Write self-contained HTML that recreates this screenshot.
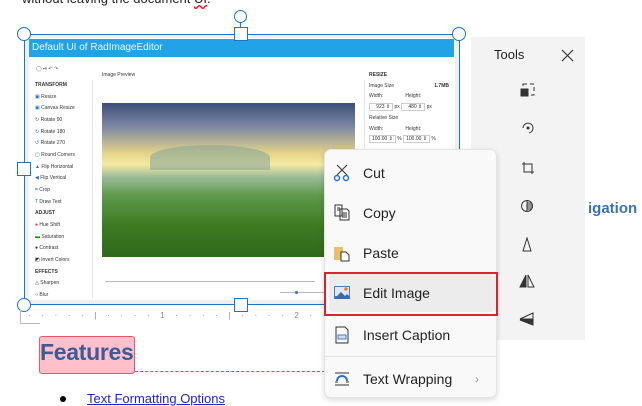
<!DOCTYPE html>
<html><head><meta charset="utf-8"><style>
*{margin:0;padding:0;box-sizing:border-box}
body{width:642px;height:401px;overflow:hidden;background:#fff;font-family:"Liberation Sans",sans-serif;position:relative}
.a{position:absolute}
.sb{font-size:5px;color:#333}
.mi{position:absolute;left:0;width:173px;height:40px;font-size:14px;color:#222;display:flex;align-items:center}
.mi span{position:absolute;left:38px}
.mi svg{position:absolute;left:8px}
</style></head><body>
<div class="a" style="left:22px;top:-9px;font-size:13px;color:#222">without leaving the document <span style="text-decoration:underline wavy red">UI</span>.</div>

<!-- embedded image -->
<div class="a" style="left:25px;top:35px;width:434px;height:269px;background:#f0f0f0"></div>
<div class="a" style="left:29px;top:38px;width:426px;height:262px;background:#fff"></div>
<div class="a" style="left:29px;top:39px;width:425px;height:18px;background:#22a3e8;color:#eaf6ff;font-size:10px;padding:3px 3px">Default UI of RadImageEditor</div>
<div class="a" style="left:92px;top:80px;width:1px;height:218px;background:#e6e6e6"></div>
<div class="a" style="left:364px;top:80px;width:1px;height:80px;background:#e6e6e6"></div>
<div class="a sb" style="left:36px;top:66px;color:#555">◯ ⏯ ↶ ↷</div>
<div class="a sb" style="left:35px;top:80px;line-height:11.65px;font-size:5px">
<b>TRANSFORM</b><br>
<span style="color:#2a6fc9">▣</span> Resize<br><span style="color:#2a6fc9">▣</span> Canvas Resize<br><span style="color:#2a6fc9">↻</span> Rotate 90<br><span style="color:#2a6fc9">↻</span> Rotate 180<br><span style="color:#2a6fc9">↺</span> Rotate 270<br><span style="color:#2a6fc9">▢</span> Round Corners<br><span style="color:#2a6fc9">▲</span> Flip Horizontal<br><span style="color:#2a6fc9">◀</span> Flip Vertical<br><span style="color:#2a6fc9">⌗</span> Crop<br><span style="color:#2a6fc9">T</span> Draw Text<br>
<b>ADJUST</b><br>
<span style="color:#e33">●</span> Hue Shift<br><span style="color:#080">▬</span> Saturation<br>● Contrast<br>◩ Invert Colors<br>
<b>EFFECTS</b><br>△ Sharpen<br>○ Blur</div>
<div class="a sb" style="left:102px;top:72px;font-size:5px">Image Preview</div>
<div class="a" style="left:102px;top:103px;width:253px;height:154px;background:linear-gradient(180deg,#3d4f7a 0%,#7a86a3 15%,#e6d58a 33%,#f5e9a2 40%,#9dbb9a 48%,#5f9a4c 60%,#3d7a22 80%,#2f6a1c 100%)"></div>
<div class="a" style="left:150px;top:145px;width:120px;height:25px;border-radius:60% 60% 0 0;background:#8aa898;opacity:.6"></div>
<div class="a" style="left:105px;top:281px;width:210px;height:1px;background:#bbb"></div>
<div class="a" style="left:280px;top:292px;width:45px;height:1px;background:#bbb"></div>
<div class="a" style="left:295px;top:291px;width:3px;height:3px;background:#2a6fc9;border-radius:50%"></div>
<div class="a sb" style="left:369px;top:70px;font-size:5px;line-height:10.7px;width:80px">
<b>RESIZE</b><br>Image Size <span style="float:right;font-weight:bold">1.7MB</span><br>Width: &nbsp;&nbsp;&nbsp;&nbsp;&nbsp;&nbsp;&nbsp;&nbsp;&nbsp;&nbsp;&nbsp;&nbsp;&nbsp;&nbsp;&nbsp;Height:<br>
<span style="border:1px solid #ccc;padding:0 2px">&nbsp;&nbsp;&nbsp;923 ⇕</span> px <span style="border:1px solid #ccc;padding:0 2px">&nbsp;&nbsp;&nbsp;480 ⇕</span> px<br>Relative Size<br>Width: &nbsp;&nbsp;&nbsp;&nbsp;&nbsp;&nbsp;&nbsp;&nbsp;&nbsp;&nbsp;&nbsp;&nbsp;&nbsp;&nbsp;&nbsp;Height:<br>
<span style="border:1px solid #ccc;padding:0 2px">100.00 ⇕</span> % <span style="border:1px solid #ccc;padding:0 2px">100.00 ⇕</span> %</div>

<!-- selection -->
<div class="a" style="left:24px;top:34px;width:436px;height:271px;border:1px solid #1a73d0"></div>
<div class="a" style="left:240px;top:16px;width:1px;height:18px;background:#1a73d0"></div>
<div class="a" style="left:234px;top:10px;width:13px;height:13px;border:1px solid #1a73d0;border-radius:50%;background:#fff"></div>
<div class="a" style="left:17px;top:27px;width:14px;height:14px;border:1px solid #1a73d0;border-radius:50%;background:#fff"></div>
<div class="a" style="left:452px;top:27px;width:14px;height:14px;border:1px solid #1a73d0;border-radius:50%;background:#fff"></div>
<div class="a" style="left:17px;top:298px;width:14px;height:14px;border:1px solid #1a73d0;border-radius:50%;background:#fff"></div>
<div class="a" style="left:234px;top:27px;width:14px;height:14px;border:1px solid #1a73d0;background:#fff"></div>
<div class="a" style="left:17px;top:162px;width:14px;height:14px;border:1px solid #1a73d0;background:#fff"></div>
<div class="a" style="left:234px;top:298px;width:14px;height:14px;border:1px solid #1a73d0;background:#fff"></div>

<!-- ruler -->
<div class="a" style="left:28px;top:311px;font-size:8px;color:#888;letter-spacing:4.2px;white-space:nowrap">· · · · · | · · · · 1 · · · · | · · · · 2 · · · · | · · · ·</div>
<div class="a" style="left:20px;top:310px;width:20px;height:14px;border-left:1px solid #bbb;border-bottom:1px solid #bbb"></div>

<div class="a" style="left:39px;top:336px;width:96px;height:38px;background:#ffc0cb;border:1px solid #ee5566;border-radius:3px"></div>
<div class="a" style="left:40px;top:339px;font-size:23px;font-weight:bold;color:#3b5d93;letter-spacing:-0.3px">Features</div>
<div class="a" style="left:135px;top:371px;width:190px;border-top:1px dashed #e44"></div>
<div class="a" style="left:60px;top:396px;width:6px;height:6px;background:#000;border-radius:50%"></div>
<div class="a" style="left:87px;top:391px;font-size:13px;color:#22c;text-decoration:underline">Text Formatting Options</div>

<div class="a" style="left:588px;top:200px;font-size:15px;font-weight:bold;color:#3a72b8">igation</div>

<!-- tools -->
<div class="a" style="left:471px;top:37px;width:114px;height:303px;background:#f3f3f3"></div>
<div class="a" style="left:494px;top:47px;font-size:13px;color:#222">Tools</div>
<svg class="a" style="left:561px;top:49px" width="13" height="13" stroke="#333" stroke-width="1.2"><path d="M1 1l11 11M12 1L1 12"/></svg>
<svg class="a" style="left:520px;top:82px" width="16" height="16" fill="none" stroke="#333"><rect x="3" y="2" width="11" height="11" stroke-dasharray="4 3"/><rect x="1" y="7" width="7" height="7" fill="#333"/></svg>
<svg class="a" style="left:521px;top:121px" width="14" height="14" fill="none" stroke="#333"><path d="M2 7a5 5 0 1 1 6 5"/><circle cx="7" cy="7" r="1" fill="#333"/></svg>
<svg class="a" style="left:521px;top:161px" width="14" height="14" fill="none" stroke="#333"><path d="M3 1v10h10M1 3h10v10"/></svg>
<svg class="a" style="left:520px;top:199px" width="14" height="14" fill="none" stroke="#333"><circle cx="7" cy="7" r="5.5"/><path d="M7 2v10M7 4h5M7 6h6M7 8h6M7 10h5"/></svg>
<svg class="a" style="left:521px;top:237px" width="12" height="16" fill="none" stroke="#333"><path d="M6 1L2 14h8z"/></svg>
<svg class="a" style="left:519px;top:274px" width="16" height="14" stroke="#333"><path d="M7 1L1 13h6z" fill="#333"/><path d="M9 1l6 12H9z" fill="none"/></svg>
<svg class="a" style="left:519px;top:312px" width="16" height="14" stroke="#333"><path d="M14 1L1 7h13z" fill="none"/><path d="M1 8h13v5z" fill="#333"/></svg>

<!-- context menu -->
<div class="a" style="left:324px;top:149px;width:173px;height:249px;background:#f9f9f9;border:1px solid #e4e4e4;border-radius:7px;box-shadow:0 2px 6px rgba(0,0,0,.15)">
<div class="mi" style="top:3px"><svg width="18" height="18" fill="none" stroke="#333"><path d="M4 1l10 10M14 1L4 11"/><circle cx="4" cy="14" r="2.5" stroke="#2a6fc9" stroke-width="1.5"/><circle cx="13" cy="14" r="2.5" stroke="#2a6fc9" stroke-width="1.5"/></svg><span>Cut</span></div>
<div class="mi" style="top:43px"><svg width="18" height="18" fill="none" stroke="#333"><path d="M2 1h7v11H2zM7 5h7l2 2v9H7z"/><path d="M9 9h5M9 11h5M9 13h5M4 4h3M4 6h3"/></svg><span>Copy</span></div>
<div class="mi" style="top:83px"><svg width="18" height="18"><rect x="1" y="3" width="9" height="13" fill="#e8c068"/><path d="M8 8h5l3 3v6H8z" fill="#fff" stroke="#333"/></svg><span>Paste</span></div>
<div class="mi" style="top:124px;left:4px;width:166px;height:38px;background:#ececec;border-radius:4px"><svg width="18" height="18" style="left:4px"><rect x="1" y="2" width="16" height="13" fill="#4a80c0"/><rect x="2" y="3" width="14" height="9" fill="#dfe9f5"/><path d="M2 14l6-6 4 4 2-2 3 3v2H2z" fill="#3a6aa8"/><circle cx="13" cy="5" r="1.8" fill="#e8803a"/></svg><span style="left:34px">Edit Image</span></div>
<div class="mi" style="top:165px"><svg width="18" height="18" fill="none" stroke="#333"><path d="M3 1h9l3 3v13H3z"/><rect x="5" y="9" width="8" height="4" fill="#cfdff0" stroke="#4a80c0"/></svg><span>Insert Caption</span></div>
<div class="a" style="left:0;top:206px;width:171px;height:1px;background:#e4e4e4"></div>
<div class="mi" style="top:209px"><svg width="18" height="18" fill="none" stroke="#333"><path d="M2 3h14M2 15h14M2 12h3M13 12h3"/><path d="M4 11a5 5 0 0 1 10 0" stroke-width="2" stroke="#2a6fc9"/></svg><span>Text Wrapping</span><b style="position:absolute;left:150px;color:#999;font-weight:normal;font-size:12px">›</b></div>
</div>
<div class="a" style="left:324px;top:272px;width:174px;height:44px;border:2px solid #e0202a"></div>
</body></html>
